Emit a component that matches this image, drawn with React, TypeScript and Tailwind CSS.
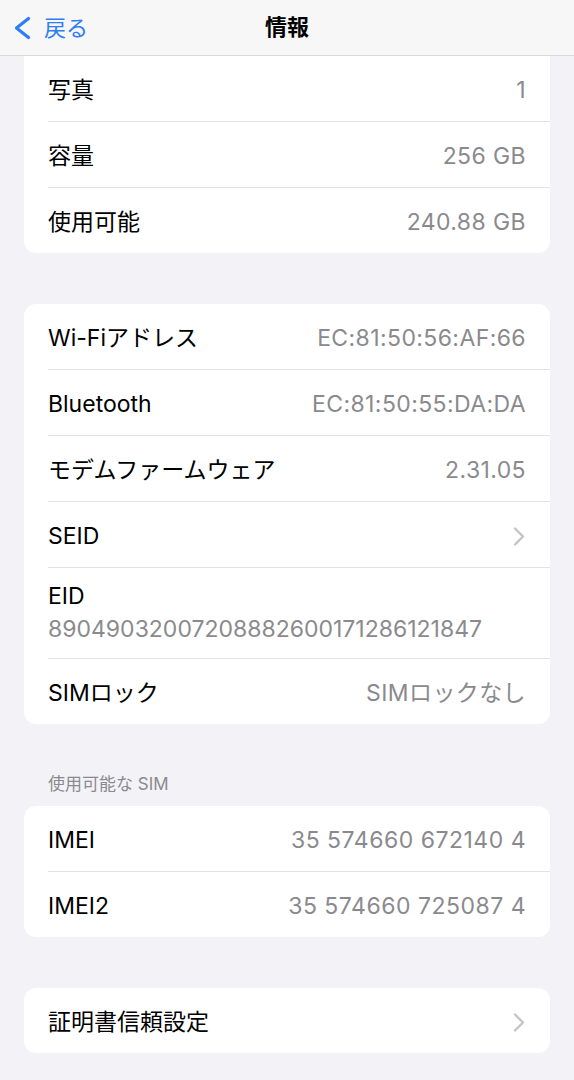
import type { ReactNode } from 'react';

const font = { fontFamily: 'Inter, "Noto Sans CJK JP", sans-serif' };

function Chevron() {
  return (
    <svg width="12" height="19" viewBox="0 0 12 19" fill="none">
      <path d="M2 1.5 L10 9.5 L2 17.5" stroke="#c4c4c7" strokeWidth="2.4" strokeLinecap="round" strokeLinejoin="round" />
    </svg>
  );
}

function Row({ label, value, last, chevron, wide }: { label: string; value?: ReactNode; last?: boolean; chevron?: boolean; wide?: boolean }) {
  return (
    <div className="pl-[24px]">
      <div
        className={`flex items-center justify-between pt-[4px] pr-[24px] ${last ? 'h-[65px]' : 'h-[66px] border-b border-[#e3e3e6]'}`}
      >
        <span className="text-[23px] text-black">{label}</span>
        {value && (
          <span className={`text-[23px] text-[#8a8a8e] ${wide ? 'tracking-[0.5px]' : 'tracking-[0.4px]'}`}>
            {value}
          </span>
        )}
        {chevron && (
          <span className="mr-[1px] flex items-center">
            <Chevron />
          </span>
        )}
      </div>
    </div>
  );
}

export default function App() {
  return (
    <div className="min-h-[1080px] bg-[#f2f2f7]" style={font}>
      <header className="grid h-[56px] grid-cols-[1fr_auto_1fr] items-center border-b border-[#d9d9dc] bg-[#f7f7f8]">
        <div className="flex items-center pl-[12px] text-[#2f7df6]">
          <svg width="20" height="24" viewBox="0 0 20 24" fill="none">
            <path d="M16.5 2.5 L4.5 12 L16.5 21.5" stroke="#2f7df6" strokeWidth="3.2" strokeLinecap="round" strokeLinejoin="round" />
          </svg>
          <span className="ml-[12px] text-[22px] leading-none">戻る</span>
        </div>
        <h1 className="text-[22px] font-semibold text-black">情報</h1>
        <div />
      </header>

      <main className="px-[24px] pb-[40px]">
        <section className="overflow-hidden rounded-b-[12px] bg-white">
          <Row label="写真" value="1" />
          <Row label="容量" value="256 GB" />
          <Row label="使用可能" value="240.88 GB" last />
        </section>

        <section className="mt-[51px] overflow-hidden rounded-[12px] bg-white">
          <Row label="Wi-Fiアドレス" value="EC:81:50:56:AF:66" />
          <Row label="Bluetooth" value="EC:81:50:55:DA:DA" />
          <Row label="モデムファームウェア" value="2.31.05" />
          <Row label="SEID" chevron />
          <div className="pl-[24px]">
            <div className="h-[91px] border-b border-[#e3e3e6] pt-[14px] pr-[24px]">
              <div className="text-[23px] leading-[28px] text-black">EID</div>
              <div className="mt-[5px] text-[23px] leading-[28px] text-[#8a8a8e]">
                89049032007208882600171286121847
              </div>
            </div>
          </div>
          <Row label="SIMロック" value="SIMロックなし" last />
        </section>

        <div className="pt-[50px] pb-[12px] pl-[24px] text-[17px] leading-[20px] text-[#8a8a8e]">使用可能な SIM</div>

        <section className="overflow-hidden rounded-[12px] bg-white">
          <Row label="IMEI" value="35 574660 672140 4" wide />
          <Row label="IMEI2" value="35 574660 725087 4" wide last />
        </section>

        <section className="mt-[51px] overflow-hidden rounded-[12px] bg-white">
          <Row label="証明書信頼設定" chevron last />
        </section>
      </main>
    </div>
  );
}
